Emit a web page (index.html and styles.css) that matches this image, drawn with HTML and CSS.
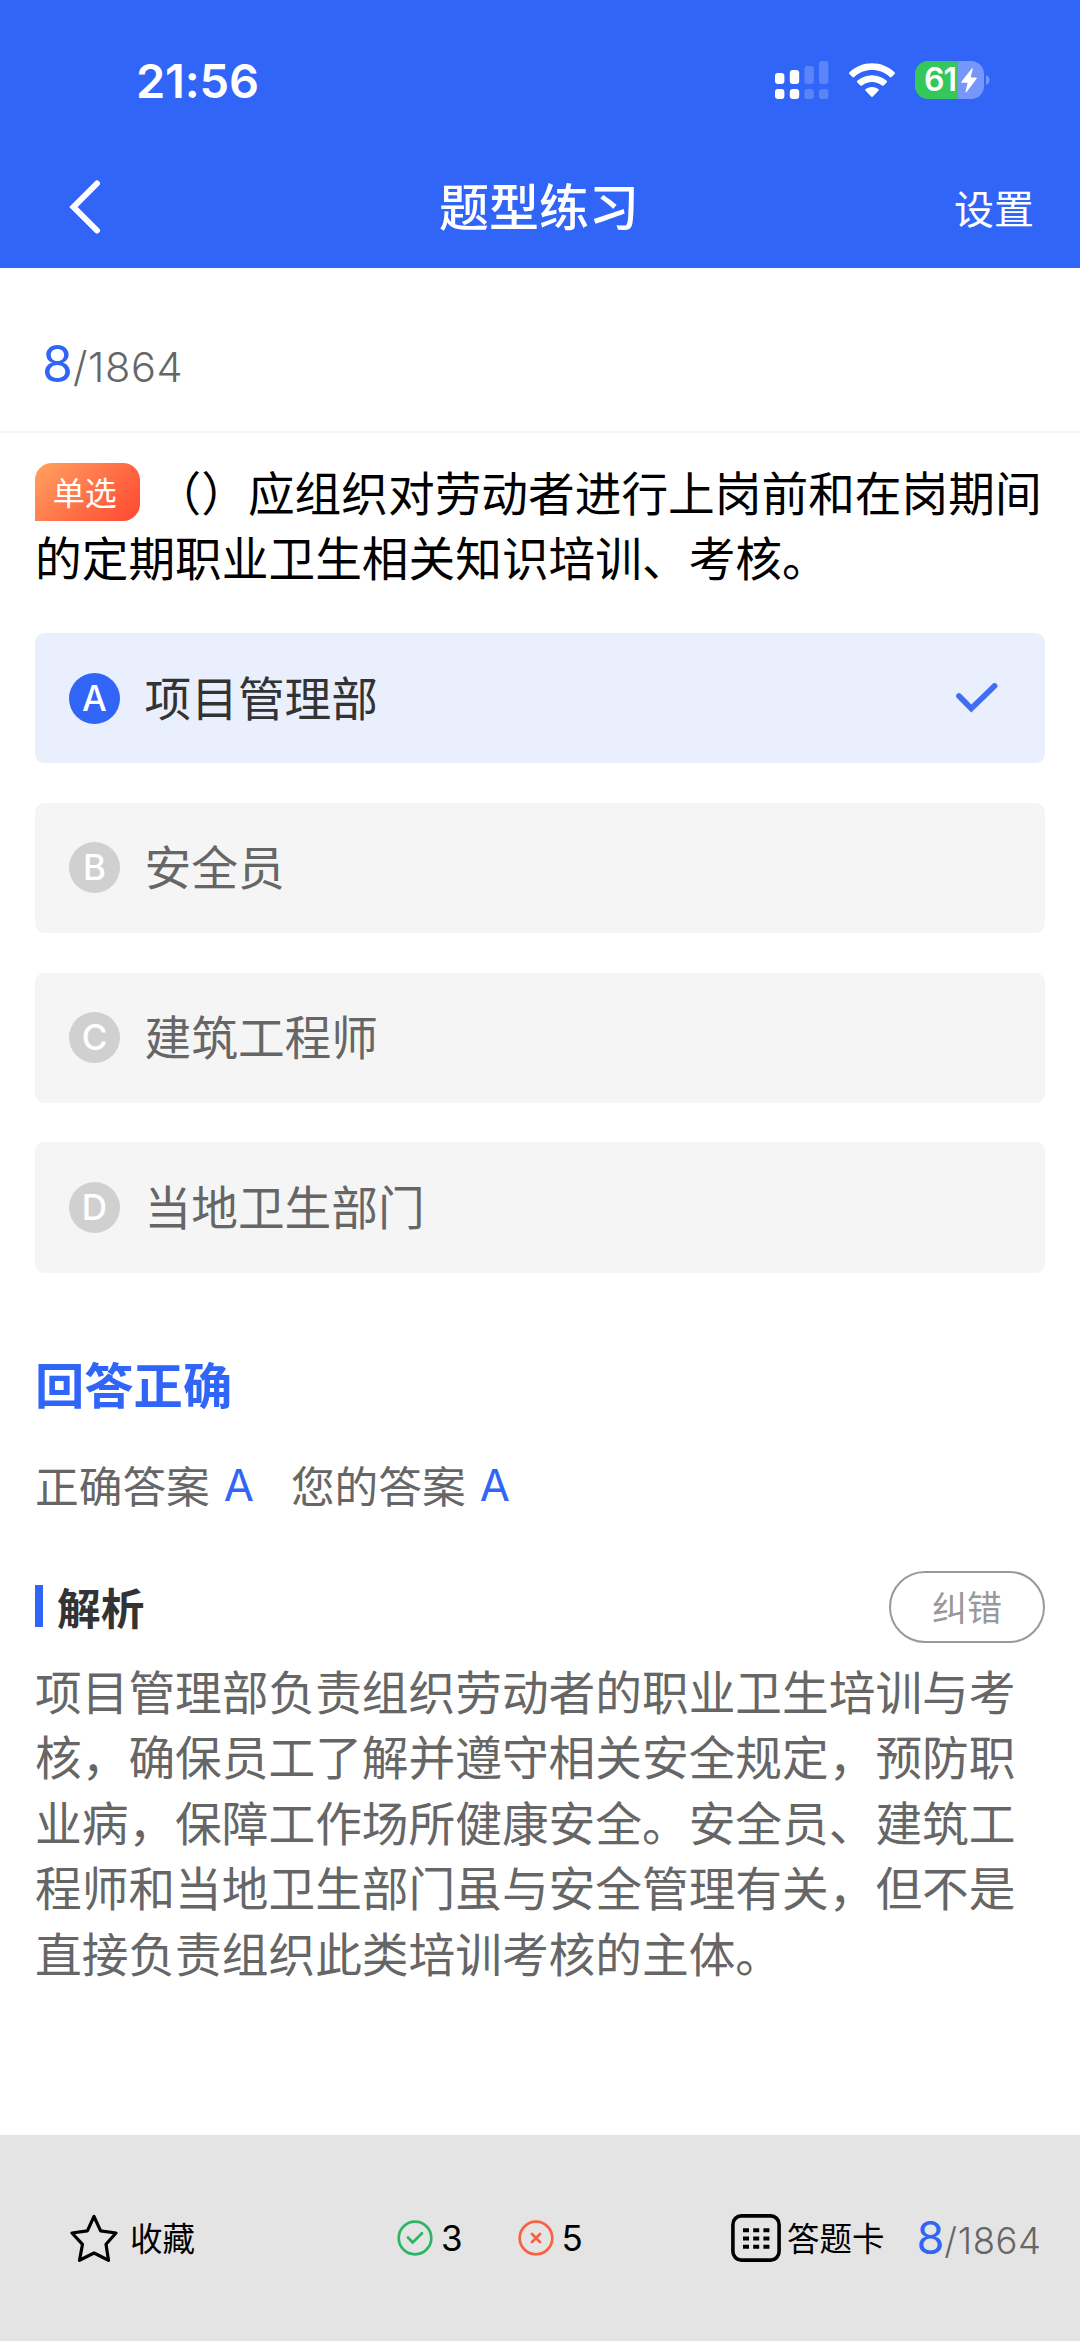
FILE: index.html
```html
<!DOCTYPE html>
<html lang="zh-CN">
<head>
<meta charset="utf-8">
<title>题型练习</title>
<link rel="stylesheet" href="styles.css">
</head>
<body>
<div class="app">
  <header class="header">
    <div class="status">
      <span class="time">21:56</span>
      <div class="status-icons">
        <svg class="signal" width="54" height="38" viewBox="0 0 54 38" fill="#fff">
          <rect x="0" y="12" width="9.4" height="11" rx="3"/><rect x="14.8" y="9" width="9.4" height="14" rx="3"/>
          <rect x="0" y="28" width="9.4" height="10" rx="3"/><rect x="14.8" y="28" width="9.4" height="10" rx="3"/>
          <g opacity=".2"><rect x="29.4" y="5" width="9.4" height="18" rx="3"/><rect x="44" y="0" width="9.4" height="23" rx="3"/>
          <rect x="29.4" y="28" width="9.4" height="10" rx="3"/><rect x="44" y="28" width="9.4" height="10" rx="3"/></g>
        </svg>
        <svg class="wifi" width="46" height="35" viewBox="0 0 46 35" fill="#fff">
          <path d="M23 .3C31.600 .3 39.700 3.700 45.600 9.300Q46.300 10.100 45.600 10.900L42.600 14Q41.700 14.800 40.800 14C36 9.600 29.800 7.100 23 7.100S10 9.600 5.200 14Q4.300 14.800 3.400 14L.4 10.900Q-.3 10.100 .4 9.300C6.300 3.700 14.400 .3 23 .3Z"/>
          <path d="M23 12.200C28.500 12.200 33.700 14.300 37.700 17.800Q38.500 18.600 37.700 19.400L34.600 22.500Q33.800 23.200 32.900 22.500C30.200 20.200 26.700 18.900 23 18.900S15.800 20.200 13.100 22.500Q12.200 23.200 11.400 22.500L8.300 19.400Q7.500 18.600 8.300 17.800C12.300 14.300 17.500 12.200 23 12.200Z"/>
          <path d="M23 24Q26.500 24 29.300 26.100Q30.200 26.900 29.400 27.800L23.900 33.600Q23 34.500 22.100 33.600L16.600 27.800Q15.800 26.900 16.700 26.100Q19.500 24 23 24Z"/>
        </svg>
        <div class="battery"><span class="level">61</span>
          <svg width="16" height="25" viewBox="0 0 16 25" fill="#fff"><path d="M11 .3Q12 0 11.700 1.200L9.600 9.500H15Q16.300 9.600 15.400 10.900L5.400 24.200Q4.300 25 4.500 23.700L6.600 14.800H1Q-.2 14.600 .6 13.400Z"/></svg>
        </div>
        <svg class="nub" width="4" height="10" viewBox="0 0 4 10" fill="#fff" fill-opacity=".32"><path d="M0 0Q3.500 1.500 3.500 5T0 10Z"/></svg>
      </div>
    </div>
    <div class="nav">
      <svg class="back" width="32" height="54" viewBox="0 0 32 54" fill="none" stroke="#fff" stroke-width="6" stroke-linecap="round" stroke-linejoin="miter"><path d="M28 3.500 4.500 27 28 50.500"/></svg>
      <h1 class="title">题型练习</h1>
      <span class="settings">设置</span>
    </div>
  </header>

  <div class="progress"><span class="num">8</span><span class="total">/1864</span></div>

  <main class="main">
    <p class="question"><span class="tag">单选</span>（）应组织对劳动者进行上岗前和在岗期间的定期职业卫生相关知识培训、考核。</p>
    <ul class="options">
      <li class="option selected"><span class="mark">A</span><span class="label">项目管理部</span>
        <svg class="tick" width="42" height="30" viewBox="0 0 42 30" fill="none" stroke="#3f6ef3" stroke-width="5.800" stroke-linecap="round"><path d="M3 13 15.300 25.500 38.500 3"/></svg></li>
      <li class="option"><span class="mark">B</span><span class="label">安全员</span></li>
      <li class="option"><span class="mark">C</span><span class="label">建筑工程师</span></li>
      <li class="option"><span class="mark">D</span><span class="label">当地卫生部门</span></li>
    </ul>
    <h2 class="result">回答正确</h2>
    <div class="answers"><span>正确答案</span><b class="key">A</b><span class="yours">您的答案</span><b class="key">A</b></div>
    <div class="analysis-head"><h3 class="analysis-title">解析</h3><span class="report">纠错</span></div>
    <p class="analysis">项目管理部负责组织劳动者的职业卫生培训与考核，确保员工了解并遵守相关安全规定，预防职业病，保障工作场所健康安全。安全员、建筑工程师和当地卫生部门虽与安全管理有关，但不是直接负责组织此类培训考核的主体。</p>
  </main>

  <footer class="footer">
    <div class="fav">
      <svg width="48" height="48" viewBox="0 0 48 48" fill="none" stroke="#000" stroke-width="3.200" stroke-linejoin="round"><path d="M24 2.500 30.600 16.800 46 19 36 30.300 38.500 46.300 24 39 9.500 46.300 12.500 30.300 2 19 17.400 16.800Z"/></svg>
      <span class="foot-label">收藏</span>
    </div>
    <div class="right">
      <svg width="36" height="36" viewBox="0 0 36 36" fill="none" stroke="#2db563" stroke-width="2.700" stroke-linecap="round" stroke-linejoin="round"><circle cx="18" cy="18" r="16.300"/><path d="M11 17.500 15.700 22.500 25 13.200"/></svg>
      <span class="count">3</span>
    </div>
    <div class="wrong">
      <svg width="36" height="36" viewBox="0 0 36 36" fill="none" stroke="#f96240" stroke-width="2.700" stroke-linecap="round"><circle cx="18" cy="18" r="16.300"/><path d="M14 14 22 22M22 14 14 22"/></svg>
      <span class="count">5</span>
    </div>
    <div class="card">
      <svg width="50" height="48" viewBox="0 0 50 48"><rect x="1.900" y="1.900" width="46.200" height="44.200" rx="8.500" fill="none" stroke="#000" stroke-width="3.600"/>
        <path d="M12 16.200h6M22.200 16.200h6M32.400 16.200h6M12 24.500h6M22.200 24.500h6M32.400 24.500h6M12 32.800h6M22.200 32.800h6M32.400 32.800h6" stroke="#000" stroke-width="4"/></svg>
      <span class="foot-label">答题卡</span>
    </div>
    <div class="foot-progress"><span class="num">8</span><span class="total">/1864</span></div>
  </footer>
</div>
</body>
</html>
```
FILE: styles.css
```css
* { box-sizing: border-box; margin: 0; padding: 0; }
body {
  width: 1080px;
  background: #fff;
  color: #000;
  font-family: "Noto Sans CJK SC", sans-serif;
  text-spacing-trim: space-all;
}
svg { display: block; flex: none; }
.app { display: flex; flex-direction: column; height: 2341px; }

.header { flex: none; height: 268px; background: #3065f7; color: #fff; }
.status { display: flex; justify-content: space-between; align-items: center; height: 160px; padding: 0 90px 0 136px; }
.time { font: 600 47px/60px Inter, sans-serif; letter-spacing: -.2px; padding-top: 1px; }
.status-icons { display: flex; align-items: center; }
.wifi { margin-left: 20px; }
.battery {
  display: flex; align-items: center; gap: 4px;
  width: 69px; height: 38px; margin-left: 20px; padding-left: 9px;
  border-radius: 13px;
  background: linear-gradient(90deg, #35c759 62%, #7696fa 62%);
}
.level { width: 33px; font: 600 32px/38px Inter, sans-serif; letter-spacing: -1px; }
.nub { margin-left: 2px; }
.nav { display: grid; grid-template-columns: 1fr auto 1fr; align-items: center; height: 94px; padding: 0 46px; }
.back { margin-left: 23px; }
.title { padding-bottom: 6px; margin-right: 2px; font-size: 50px; font-weight: 500; line-height: 72px; }
.settings { justify-self: end; padding-bottom: 1px; font-size: 40px; line-height: 60px; }

.progress {
  flex: none; height: 165px; padding: 64px 0 0 42px;
  border-bottom: 2px solid #f5f5f5;
  font-family: Inter, sans-serif; font-weight: 300; line-height: 64px;
}
.num { color: #3065f7; font-size: 50px; font-weight: 400; }
.total { color: #666; font-size: 41.500px; letter-spacing: .6px; }

.main { flex: 1; padding: 25px 35px 0; }
.question { width: 1012px; font-size: 46.700px; line-height: 65.400px; }
.tag {
  display: inline-block; width: 104.500px; height: 58px; margin-right: 15px; padding-right: 5px;
  border-radius: 17px 17px 17px 0;
  background: linear-gradient(135deg, #ffa261, #ff4630);
  color: #fff; font-size: 32px; line-height: 56px; text-align: center; vertical-align: 6px;
}
.options { display: grid; gap: 39.400px; margin-top: 44px; list-style: none; }
.option {
  display: flex; align-items: center; height: 130.500px; padding: 0 47px 0 34px;
  border-radius: 9px; background: #f5f5f5; color: #666; font-size: 46.700px; line-height: 66px;
}
.option.selected { background: #eaeffe; color: #333; }
.label { padding-bottom: 5px; }
.mark {
  width: 51px; height: 51px; margin-right: 24.500px; border-radius: 50%;
  background: #d1d0d1; color: #fff;
  font: 500 35px/51px Inter, sans-serif; text-align: center;
}
.selected .mark { background: #3065f7; }
.tick { margin-left: auto; }

.result { margin-top: 75px; color: #3065f7; font-size: 49.300px; font-weight: 700; line-height: 70px; }
.answers { display: flex; align-items: center; height: 64px; margin-top: 34px; color: #666; font-size: 43.700px; }
.key { margin-left: 14px; padding-top: 5px; color: #3065f7; font: 400 43.700px/64px Inter, sans-serif; }
.yours { margin-left: 37px; }
.analysis-head { display: flex; align-items: center; justify-content: space-between; height: 72px; margin-top: 55px; }
.analysis-title {
  display: flex; align-items: center; gap: 14px;
  color: #333; font-size: 43.700px; font-weight: 700; line-height: 60px; height: 64px; padding-bottom: 2px;
}
.analysis-title::before { content: ""; width: 8px; height: 42px; background: #3065f7; }
.report {
  width: 156px; height: 72px; border: 2.500px solid #999; border-radius: 36px;
  color: #999; font-size: 35px; line-height: 66px; text-align: center;
}
.analysis { width: 985px; margin-top: 14px; color: #666; font-size: 46.700px; line-height: 65.400px; }

.footer {
  flex: none; display: flex; align-items: center; height: 206px; padding-left: 70px;
  background: #e4e4e4; font-size: 32.500px;
}
.footer > div { display: flex; align-items: center; flex: none; }
.foot-label { padding-bottom: 3px; }
.fav { width: 327px; gap: 12px; }
.right, .wrong { width: 120.500px; gap: 8px; }
.count { font: 400 35px/48px Inter, sans-serif; }
.card { margin-left: 93px; gap: 6px; }
.footer > .foot-progress { align-items: baseline; margin-left: 32px; padding-bottom: 1px; font-family: Inter, sans-serif; font-weight: 300; }
.foot-progress .num { font-size: 45px; }
.foot-progress .total { font-size: 36.500px; }
```
